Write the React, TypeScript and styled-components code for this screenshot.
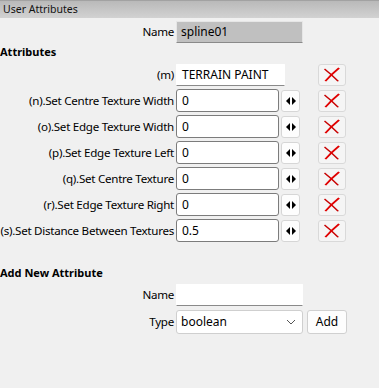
import React from 'react'
import styled, { createGlobalStyle } from 'styled-components'

const GlobalStyle = createGlobalStyle`
  html, body {
    margin: 0;
    padding: 0;
    background: #f0f0f0;
  }
  body {
    font-family: 'Noto Sans', 'Liberation Sans', sans-serif;
    font-size: 12px;
    color: #000;
  }
`

const Panel = styled.div`
  width: 379px;
  height: 388px;
  background: #f0f0f0;
  overflow: hidden;
`

const Header = styled.div`
  height: 18px;
  box-sizing: border-box;
  border-top: 1px solid #a2a2a2;
  background: linear-gradient(#b9b9b9, #d2d2d2);
  padding-left: 3px;
  line-height: 16px;
  font-size: 10.5px;
  color: #111;
`

const Row = styled.div<{ $top?: number }>`
  display: flex;
  align-items: center;
  height: 23px;
  margin-top: ${p => p.$top ?? 3}px;
`

const Label = styled.div`
  width: 174px;
  flex: none;
  display: flex;
  justify-content: flex-end;
  white-space: nowrap;
  font-size: 11.6px;
  letter-spacing: -0.27px;
  margin-right: 2px;
`

const SectionTitle = styled.div<{ $top: number }>`
  font-weight: bold;
  font-size: 11px;
  margin-top: ${p => p.$top}px;
  height: 14px;
  line-height: 14px;
`

const Field = styled.div<{ $width: number; $kind?: 'framed' | 'flat' | 'disabled' }>`
  width: ${p => p.$width}px;
  height: ${p => (p.$kind === 'framed' ? 23 : 22)}px;
  box-sizing: border-box;
  flex: none;
  display: flex;
  align-items: center;
  padding-left: ${p => (p.$kind === 'disabled' ? 4 : 5)}px;
  background: ${p => (p.$kind === 'disabled' ? '#c0c0c0' : '#fff')};
  border: 1px solid
    ${p => (p.$kind === 'framed' ? '#7c7c7c' : p.$kind === 'disabled' ? '#e6e6e6' : '#fff')};
  border-bottom-color: ${p => (p.$kind === 'framed' ? '#7c7c7c' : '#8a8a8a')};
  border-radius: ${p => (p.$kind === 'framed' ? 3 : 1)}px;
`

const SpinButton = styled.div`
  width: 19px;
  height: 22px;
  box-sizing: border-box;
  margin-left: 2px;
  flex: none;
  background: #fdfdfd;
  border: 1px solid #d6d6d6;
  border-radius: 3px;
  display: flex;
  align-items: center;
  justify-content: center;
`

const DeleteButton = styled.div<{ $gap: number }>`
  width: 28px;
  height: 22px;
  box-sizing: border-box;
  margin-left: ${p => p.$gap}px;
  flex: none;
  background: #f5f5f5;
  border: 1px solid #d9d9d9;
  border-radius: 3px;
  display: flex;
  align-items: center;
  justify-content: center;
`

const Select = styled.div`
  width: 127px;
  height: 24px;
  box-sizing: border-box;
  flex: none;
  background: #fff;
  border: 1px solid #cfcfcf;
  border-radius: 3px;
  display: flex;
  align-items: center;
  justify-content: space-between;
  padding: 0 6px 0 4px;
`

const AddButton = styled.div`
  width: 40px;
  height: 24px;
  box-sizing: border-box;
  margin-left: 4px;
  flex: none;
  background: #fdfdfd;
  border: 1px solid #d0d0d0;
  border-radius: 3px;
  display: flex;
  align-items: center;
  justify-content: center;
`

const SpinIcon = () => (
  <svg width="10" height="8" viewBox="0 0 10 8">
    <path d="M4 0 L0 4 L4 8 Z" fill="#000" />
    <path d="M6 0 L10 4 L6 8 Z" fill="#000" />
  </svg>
)

const CrossIcon = () => (
  <svg width="18" height="15" viewBox="0 0 18 15">
    <path d="M2 1.5 Q9 7 16 14 L14.4 14.4 Q8 8.2 1 2.6 Z" fill="#c80000" />
    <path d="M15.2 0.6 L16.9 1.5 Q9 8 3.2 14.5 L1.5 13.8 Q8 6.5 15.2 0.6 Z" fill="#e00000" />
  </svg>
)

const Chevron = () => (
  <svg width="10" height="6" viewBox="0 0 10 6">
    <path d="M1 1 L5 5 L9 1" fill="none" stroke="#555" strokeWidth="1" />
  </svg>
)

const attributes = [
  ['(n).Set Centre Texture Width', '0'],
  ['(o).Set Edge Texture Width', '0'],
  ['(p).Set Edge Texture Left', '0'],
  ['(q).Set Centre Texture', '0'],
  ['(r).Set Edge Texture Right', '0'],
  ['(s).Set Distance Between Textures', '0.5']
]

export default function App() {
  return (
    <Panel>
      <GlobalStyle />
      <Header>User Attributes</Header>
      <Row $top={2}>
        <Label>Name</Label>
        <Field $width={127} $kind="disabled">spline01</Field>
      </Row>
      <SectionTitle $top={2}>Attributes</SectionTitle>
      <Row $top={4}>
        <Label>(m)</Label>
        <Field $width={109} $kind="flat">TERRAIN PAINT</Field>
        <DeleteButton $gap={33}>
          <CrossIcon />
        </DeleteButton>
      </Row>
      {attributes.map(([label, value]) => (
        <Row key={label}>
          <Label>{label}</Label>
          <Field $width={103} $kind="framed">{value}</Field>
          <SpinButton>
            <SpinIcon />
          </SpinButton>
          <DeleteButton $gap={18}>
            <CrossIcon />
          </DeleteButton>
        </Row>
      ))}
      <SectionTitle $top={24}>Add New Attribute</SectionTitle>
      <Row $top={3}>
        <Label>Name</Label>
        <Field $width={127} $kind="flat" />
      </Row>
      <Row $top={4}>
        <Label>Type</Label>
        <Select>
          <span>boolean</span>
          <Chevron />
        </Select>
        <AddButton>Add</AddButton>
      </Row>
    </Panel>
  )
}
